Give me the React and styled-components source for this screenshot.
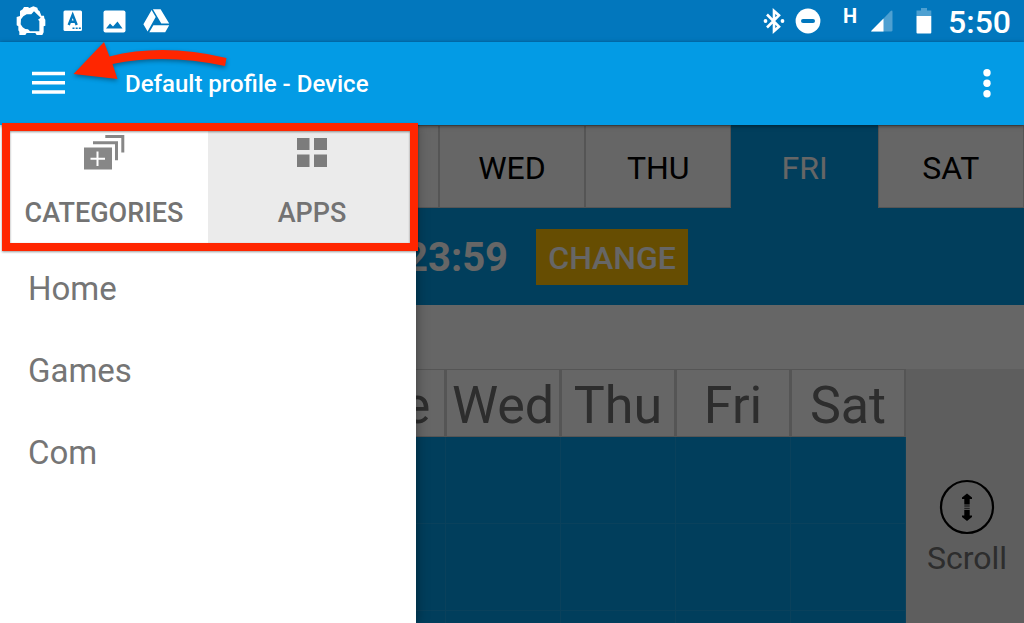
import React from "react";
import styled, { createGlobalStyle, css } from "styled-components";

const GlobalStyle = createGlobalStyle`
  * { box-sizing: border-box; }
  body { margin: 0; overflow: hidden; font-family: Roboto, sans-serif; }
  button { font-family: inherit; border: 0; padding: 0; background: none; cursor: pointer; }
`;

const Screen = styled.div`
  position: relative;
  display: flex;
  flex-direction: column;
  height: 100vh;
  overflow: hidden;
  background: #fff;
`;

const StatusBar = styled.div`
  display: flex;
  flex: none;
  align-items: center;
  justify-content: space-between;
  height: 42px;
  padding: 0 13px 0 16px;
  background: #0277bd;
  color: #fff;
`;

const StatusGroup = styled.div`
  display: flex;
  align-items: center;
  gap: ${(p) => p.$gap}px;
`;

const NetworkType = styled.span`
  height: 34px;
  margin: 0 4px 0 12px;
  font-size: 20px;
  line-height: 24px;
  font-weight: 700;
`;

const Clock = styled.time`
  margin-left: 6px;
  padding-top: 2px;
  font-size: 32px;
  line-height: 40px;
  font-weight: 500;
`;

const AppBar = styled.header`
  position: relative;
  z-index: 2;
  display: flex;
  flex: none;
  align-items: center;
  height: 83px;
  padding: 0 24px 0 32px;
  background: #039be5;
  color: #fff;
  box-shadow: 0 1px 4px rgba(0, 0, 0, 0.5);
`;

const IconButton = styled.button`
  display: flex;
  color: inherit;
`;

const Title = styled.h1`
  flex: 1;
  margin: 0;
  padding-left: 60px;
  font-size: 24px;
  line-height: 28px;
  font-weight: 500;
`;

const Body = styled.div`
  position: relative;
  flex: 1;
  min-height: 0;
`;

const Schedule = styled.main`
  display: flex;
  flex-direction: column;
  height: 100%;
  overflow: hidden;
`;

const DayTabs = styled.nav`
  display: flex;
  flex: none;
  height: 83px;
  background: #039be5;
`;

const DayTab = styled.button`
  flex: 1;
  padding-top: 2px;
  font-size: 32px;
  color: #000;
  background: #fff;
  border: 1px solid #d4d4d4;
  ${(p) =>
    p.$active &&
    css`
      color: #fff;
      background: #039be5;
      border-color: #039be5;
    `}
`;

const TimeBar = styled.section`
  display: flex;
  flex: none;
  align-items: center;
  gap: 28px;
  height: 97px;
  padding-left: 405px;
  background: #039be5;
  color: #fff;
`;

const EndTime = styled.time`
  padding-top: 2px;
  font-size: 40px;
  font-weight: 700;
`;

const ChangeButton = styled.button`
  width: 152px;
  height: 56px;
  padding-top: 2px;
  background: #ffc107;
  color: #fff;
  font-size: 32px;
  font-weight: 500;
`;

const Calendar = styled.section`
  display: flex;
  flex: 1;
  min-height: 0;
  margin-top: 64px;
  overflow: hidden;
`;

const WeekArea = styled.div`
  flex: 1;
  min-width: 0;
`;

const WeekTable = styled.table`
  width: 100%;
  table-layout: fixed;
  border-collapse: separate;
  border-spacing: 0;
`;

const HourHead = styled.td`
  width: 101px;
`;

const WeekHead = styled.th`
  height: 68px;
  padding: 6px 0 0;
  border: 1px solid #d4d4d4;
  border-right-width: 2px;
  font-size: 52px;
  line-height: 60px;
  font-weight: 400;
  color: #707070;
`;

const HourCell = styled.td`
  height: 87px;
  padding: 0;
  background: #039be5;
  border-right: 1px solid #1ba3e5;
  border-bottom: 1px solid #1ba3e5;
`;

const ScrollPane = styled.aside`
  display: flex;
  flex: none;
  flex-direction: column;
  align-items: center;
  width: 118px;
  padding: 110px 0 0 4px;
  background: #ebebeb;
`;

const ScrollButton = styled.button`
  display: flex;
  flex-direction: column;
  align-items: center;
  gap: 4px;
  font-size: 32px;
  line-height: 38px;
  color: #707070;
`;

const Scrim = styled.div`
  position: absolute;
  inset: 0;
  background: rgba(0, 0, 0, 0.6);
`;

const Drawer = styled.aside`
  position: absolute;
  top: 0;
  bottom: 0;
  left: 0;
  width: 416px;
  background: #fff;
  box-shadow: 0 0 12px rgba(0, 0, 0, 0.4);
`;

const DrawerTabs = styled.div`
  display: flex;
  height: 119px;
`;

const DrawerTab = styled.button`
  display: flex;
  flex: 1;
  flex-direction: column;
  align-items: center;
  gap: 26px;
  padding-top: 10px;
  background: ${(p) => (p.$active ? "#fff" : "#ebebeb")};
  color: #737373;
  font-size: 27px;
  line-height: 34px;
  font-weight: 500;
`;

const CategoryList = styled.ul`
  margin: 0;
  padding: 4px 0 0;
  list-style: none;
`;

const CategoryLink = styled.a`
  display: block;
  padding: 0 28px;
  font-size: 33px;
  line-height: 82px;
  color: #757575;
  text-decoration: none;
`;

const Highlight = styled.div`
  position: absolute;
  z-index: 3;
  top: 123px;
  left: 2px;
  width: 416px;
  height: 128px;
  border: 8px solid #ff2600;
  filter: drop-shadow(0 1px 1px rgba(0, 0, 0, 0.4));
  pointer-events: none;
`;

const Arrow = styled.svg`
  position: absolute;
  z-index: 3;
  top: 40px;
  left: 72px;
  filter: drop-shadow(0 2px 2px rgba(0, 0, 0, 0.35));
  pointer-events: none;
`;

const HouseIcon = () => (
  <svg width="30" height="30" viewBox="48 17 90 90" fill="#fff" fillRule="evenodd" aria-hidden="true">
    <path d="M60 32L68 27 72 20H84L88 23 100 18 112 22 114 29 119 33 124 46H132L133 54 136 58V76L131 78V96L127 104H110L106 98H80L76 104H58V94L55 90V78L50 75V50L60 47ZM102 33L94 42H80L70 48 63 57 62 72 68 81 76 86 84 87 90 93H118V62L114 58 122 52Z" />
  </svg>
);

const LetterIcon = () => (
  <svg width="23" height="22" viewBox="0 0 23 22" aria-hidden="true">
    <rect x="0.5" y="0.5" width="18.5" height="20.5" rx="1.5" fill="#fff" />
    <path d="M5.700 15 9.700 4.800 13.700 15M7 11.700H12.300" fill="none" stroke="#0277bd" strokeWidth="2.400" />
    <path d="M9.500 18.300h2M12.700 18.300h2M15.800 18.300h2" stroke="#0277bd" strokeWidth="1.400" />
  </svg>
);

const ImageIcon = () => (
  <svg width="23" height="23" viewBox="0 0 23 23" aria-hidden="true">
    <rect x="0.5" y="0.5" width="22" height="22" rx="2" fill="#fff" />
    <path d="M3 18.500 7 13.500 10 16.500 14.500 11.500 19.500 18.500Z" fill="#0277bd" />
  </svg>
);

const DriveIcon = () => (
  <svg width="27" height="24" viewBox="0 0 27 24" fill="#fff" aria-hidden="true">
    <path d="M8.600 1 12.700 8 4.600 22.500.4 15.200ZM9.900.3H17.600L26.200 14.500H18.300ZM10.400 16.200H26.200L22.200 23.300H6.300Z" />
  </svg>
);

const BluetoothIcon = () => (
  <svg width="22" height="26" viewBox="0 0 22 26" aria-hidden="true">
    <path d="M4 6.500 16 18.600 11 23V3l5 4.400L4 19.500" fill="none" stroke="#fff" strokeWidth="2.600" />
    <circle cx="2.500" cy="13" r="1.900" fill="#fff" />
    <circle cx="19.500" cy="13" r="1.900" fill="#fff" />
  </svg>
);

const DoNotDisturbIcon = () => (
  <svg width="26" height="26" viewBox="0 0 26 26" aria-hidden="true">
    <circle cx="13" cy="13" r="12.400" fill="#fff" />
    <rect x="6" y="11" width="14" height="4" rx="2" fill="#0277bd" />
  </svg>
);

const SignalIcon = () => (
  <svg width="22" height="22" viewBox="0 0 22 22" aria-hidden="true">
    <path d="M0 21.500 19.500 1.200Q21.500-.5 21.500 2V20.500Q21.500 21.500 20 21.500Z" fill="#fff" opacity="0.3" />
    <path d="M12.500 8.500V21.500H1Q-.5 21.500.6 20.500Z" fill="#fff" />
  </svg>
);

const BatteryIcon = () => (
  <svg width="16" height="26" viewBox="0 0 16 26" fill="#fff" aria-hidden="true">
    <path d="M5 0H11V2.500H15.300V8H.5V2.500H5Z" opacity="0.3" />
    <path d="M.5 8H15.300V24.500Q15.300 25.500 14.300 25.500H1.500Q.5 25.500.5 24.500Z" />
  </svg>
);

const MenuIcon = () => (
  <svg width="33" height="26" viewBox="0 0 33 26" fill="#fff" aria-hidden="true">
    <path d="M0 .7H33V4.200H0ZM0 10H33V13.500H0ZM0 19.300H33V22.800H0Z" />
  </svg>
);

const MoreIcon = () => (
  <svg width="26" height="32" viewBox="0 0 26 32" fill="#fff" aria-hidden="true">
    <circle cx="13" cy="4.700" r="3.700" />
    <circle cx="13" cy="15.200" r="3.700" />
    <circle cx="13" cy="25.700" r="3.700" />
  </svg>
);

const CategoriesIcon = () => (
  <svg width="42" height="35" viewBox="0 0 42 35" aria-hidden="true">
    <path d="M1 12.500H29V34.500H1Z" fill="#878787" />
    <path d="M14.500 16.500V31M7.500 23.700H22" stroke="#fff" strokeWidth="2" />
    <path d="M10 7.700H33.500V25.300M22.300 1.600H39.800V17.600" fill="none" stroke="#878787" strokeWidth="3" />
  </svg>
);

const AppsIcon = () => (
  <svg width="30" height="35" viewBox="0 0 30 35" fill="#7c7c7c" aria-hidden="true">
    <path d="M0 3H12.500V15H0ZM17 3H30V15H17ZM0 19.500H12.500V32H0ZM17 19.500H30V32H17Z" />
  </svg>
);

const ScrollIcon = () => (
  <svg width="56" height="56" viewBox="0 0 56 56" aria-hidden="true">
    <circle cx="28" cy="28" r="26" fill="none" stroke="#000" strokeWidth="2.200" />
    <path d="M28 14.500 33 18.500V20H30.700V25.500H25.300V20H23V18.500ZM28 42 33 38V36.500H30.700V31H25.300V36.500H23V38Z" />
    <path d="M25.300 27H30.700M25.300 29.500H30.700" stroke="#000" strokeWidth="1.300" opacity="0.6" />
  </svg>
);

const days = ["Sun", "Mon", "Tue", "Wed", "Thu", "Fri", "Sat"];
const hours = [0, 1, 2];

export default function App() {
  return (
    <Screen>
      <GlobalStyle />
      <StatusBar>
        <StatusGroup $gap={17}>
          <HouseIcon />
          <LetterIcon />
          <ImageIcon />
          <DriveIcon />
        </StatusGroup>
        <StatusGroup $gap={10}>
          <BluetoothIcon />
          <DoNotDisturbIcon />
          <NetworkType>H</NetworkType>
          <StatusGroup $gap={23}>
            <SignalIcon />
            <BatteryIcon />
          </StatusGroup>
          <Clock>5:50</Clock>
        </StatusGroup>
      </StatusBar>
      <AppBar>
        <IconButton aria-label="Menu">
          <MenuIcon />
        </IconButton>
        <Title>Default profile - Device</Title>
        <IconButton aria-label="More options">
          <MoreIcon />
        </IconButton>
      </AppBar>
      <Body>
        <Schedule>
          <DayTabs>
            {days.map((day) => (
              <DayTab key={day} $active={day === "Fri"}>
                {day.toUpperCase()}
              </DayTab>
            ))}
          </DayTabs>
          <TimeBar>
            <EndTime>23:59</EndTime>
            <ChangeButton>CHANGE</ChangeButton>
          </TimeBar>
          <Calendar>
            <WeekArea>
              <WeekTable>
                <thead>
                  <tr>
                    <HourHead />
                    {days.map((day) => (
                      <WeekHead key={day} scope="col">
                        {day}
                      </WeekHead>
                    ))}
                  </tr>
                </thead>
                <tbody>
                  {hours.map((hour) => (
                    <tr key={hour}>
                      <td />
                      {days.map((day) => (
                        <HourCell key={day} />
                      ))}
                    </tr>
                  ))}
                </tbody>
              </WeekTable>
            </WeekArea>
            <ScrollPane>
              <ScrollButton>
                <ScrollIcon />
                Scroll
              </ScrollButton>
            </ScrollPane>
          </Calendar>
        </Schedule>
        <Scrim />
        <Drawer>
          <DrawerTabs>
            <DrawerTab $active>
              <CategoriesIcon />
              CATEGORIES
            </DrawerTab>
            <DrawerTab>
              <AppsIcon />
              APPS
            </DrawerTab>
          </DrawerTabs>
          <CategoryList>
            {["Home", "Games", "Com"].map((name) => (
              <li key={name}>
                <CategoryLink href="#">{name}</CategoryLink>
              </li>
            ))}
          </CategoryList>
        </Drawer>
      </Body>
      <Highlight />
      <Arrow width="160" height="44" viewBox="72 40 160 44" aria-hidden="true">
        <path d="M73.500 74 104 42 109.500 56.500Q163 43 226.500 58L225 66Q165 53 112.500 64L117.500 79Z" fill="#ff2600" />
      </Arrow>
    </Screen>
  );
}
